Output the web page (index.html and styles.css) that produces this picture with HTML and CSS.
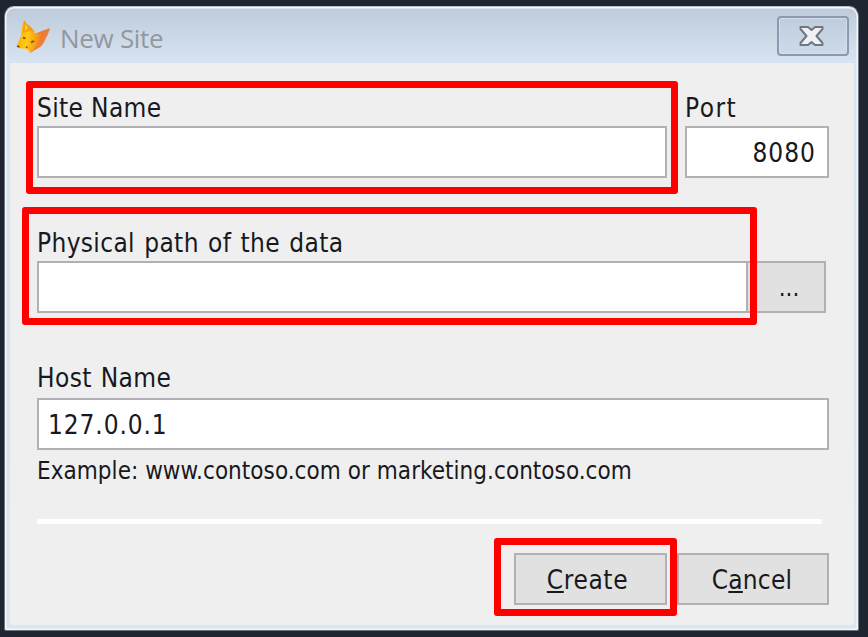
FILE: index.html
```html
<!DOCTYPE html>
<html lang="en">
<head>
<meta charset="utf-8">
<title>New Site</title>
<link rel="stylesheet" href="styles.css">
</head>
<body>
<main class="window">
  <header class="titlebar">
    <svg class="fox" width="36" height="38" viewBox="0 0 36 38" aria-hidden="true">
      <defs>
        <linearGradient id="fur" x1="0" y1="0" x2="1" y2="0.2">
          <stop offset="0" stop-color="#f5ac10"/><stop offset=".5" stop-color="#ffc912"/><stop offset="1" stop-color="#f08a1c"/>
        </linearGradient>
        <linearGradient id="ear" x1="0" y1="0" x2="1" y2="1">
          <stop offset="0" stop-color="#e0702c"/><stop offset=".6" stop-color="#f07f3a"/><stop offset="1" stop-color="#f7a77a"/>
        </linearGradient>
      </defs>
      <path d="M19 16 Q25 13 34 10 Q32 17 30 20 Q27 29 19 32 L14 35 Z" fill="url(#ear)"/>
      <path d="M8 2 Q10 6 14 8 L19 15 Q22 17 26 15 L24 20 L21 27 L15 35 L11 31 L2 30 L1 27 L5 18 L6 9 Z" fill="url(#fur)"/>
      <path d="M8 2 Q10 6 14 8 L19 14 L13 13 L7 15 Z" fill="#f3a014"/>
      <path d="M9 6 L12 10 L9 13 Z" fill="#ffd522"/>
      <path d="M7 19.500 l2.500 1 M15 24.500 l3 -1.500 M1 28 l2.500 1 M10 29 l1.500 .5" stroke="#7d4c0c" stroke-width="1.700" fill="none"/>
    </svg>
    <h1 class="title">New Site</h1>
    <button class="close" aria-label="Close">
      <svg width="27" height="22" viewBox="0 0 27 22">
        <path d="M2.500 2 H10 L13.500 5 L17 2 H24.500 V4 L18.500 11 L24.500 18 V20 H17 L13.500 17 L10 20 H2.500 V18 L8.500 11 L2.500 4 Z" fill="#f0f1f3" stroke="#707683" stroke-width="2" stroke-linejoin="round"/>
      </svg>
    </button>
  </header>
  <form class="content">
    <div class="row row-site">
      <div class="field site marked">
        <label class="label l-site">Site Name</label>
        <div class="input"></div>
      </div>
      <div class="field port">
        <label class="label l-port">Port</label>
        <div class="input right"><span class="v-port">8080</span></div>
      </div>
    </div>
    <div class="row row-path">
      <div class="field path marked">
        <label class="label l-path">Physical path of the data</label>
        <div class="input"></div>
      </div>
      <div class="button browse"><span class="dots">...</span></div>
    </div>
    <div class="field host">
      <label class="label l-host">Host Name</label>
      <div class="input"><span class="v-host">127.0.0.1</span></div>
      <p class="hint">Example: www.contoso.com or marketing.contoso.com</p>
    </div>
    <div class="rule"></div>
    <div class="actions">
      <div class="button create marked"><span class="b-create"><u>C</u>reate</span></div>
      <div class="button cancel"><span class="b-cancel">C<u>a</u>ncel</span></div>
    </div>
  </form>
</main>
</body>
</html>
```
FILE: styles.css
```css
* { box-sizing: border-box; }
body {
  margin: 0;
  width: 868px;
  height: 637px;
  padding: 6px 9px 6px 4px;
  overflow: hidden;
  background: #1f2631;
  font-family: "DejaVu Sans Condensed", "DejaVu Sans", sans-serif;
  font-stretch: condensed;
  color: #181920;
}
.window {
  height: 625px;
  border: 1px solid #6d747d;
  border-top-color: #b9c2cc;
  border-radius: 10px 10px 2px 2px;
  background: linear-gradient(#bdcbdb, #d8e4f1 57px, #dce5f0);
  box-shadow: inset 0 0 0 1.500px #f3f6fa;
  padding: 0 4px 4px 5px;
}
.titlebar {
  height: 56px;
  display: flex;
  align-items: flex-start;
  padding-left: 6px;
}
.fox { margin-top: 11px; flex: none; }
.title {
  margin: 12px 0 0 8px;
  font: 400 26px/38px "Open Sans", sans-serif;
  letter-spacing: -0.3px;
  color: #92989f;
}
.close {
  margin: 9px 5px 0 auto;
  width: 72px;
  height: 40px;
  padding: 0 3px 1px 0;
  border: 2px solid #8c99b2;
  border-radius: 4px;
  background: linear-gradient(#c0cddd, #cddaea);
  box-shadow: inset 0 0 0 1px #d4dfeb;
  display: flex;
  align-items: center;
  justify-content: center;
}
.content {
  height: 562px;
  background: #efefef;
  padding: 28px 25px 0 27px;
}
.row { display: flex; }
.row-site { justify-content: space-between; height: 87px; }
.row-path { margin-top: 48px; height: 87px; align-items: flex-end; }
.field { position: relative; }
.site { width: 630px; }
.port { width: 144px; }
.path { width: 711px; }
.host { margin-top: 50px; }
.label { display: block; height: 35px; font-size: 26px; line-height: 34px; white-space: nowrap; }
.l-site { letter-spacing: 0.35px; }
.l-port { letter-spacing: 1.5px; }
.l-path { letter-spacing: 0.35px; word-spacing: 1.5px; }
.l-host { line-height: 30px; letter-spacing: 0.4px; word-spacing: 1px; }
.input {
  height: 52px;
  border: 2px solid #b1b1b5;
  background: #fff;
  padding: 0 9px;
  font-size: 26px;
  line-height: 51px;
}
.v-port { letter-spacing: 1px; }
.v-host { letter-spacing: 0.9px; }
.right { text-align: right; padding-right: 11px; }
.marked { position: relative; }
.marked::after {
  content: "";
  position: absolute;
  border: 7px solid #f00;
  border-radius: 3px;
}
.site::after { inset: -10px -11px -16px -11px; }
.path::after { inset: -19px -9px -12px -15px; }
.create::after { inset: -17px -12px -13px -22px; }
.button {
  height: 52px;
  border: 2px solid #b1b1b1;
  background: #e1e1e1;
  display: flex;
  justify-content: center;
  font-size: 26px;
  line-height: 51px;
}
.browse { width: 78px; border-left: 0; padding-left: 6px; }
.dots { font-size: 24px; }
.b-create { letter-spacing: 0.6px; margin-right: 6px; }
.b-cancel { letter-spacing: 0.2px; margin-right: 2px; }
.hint { margin: 5px 0 0; font-size: 24px; line-height: 32px; letter-spacing: 0.04px; white-space: nowrap; }
.rule { height: 5px; width: 785px; margin-top: 32px; background: #fff; border-radius: 2px; }
.actions { display: flex; justify-content: flex-end; gap: 10px; margin-top: 29px; }
.create { width: 153px; }
.cancel { width: 152px; }
u { text-decoration-thickness: 2px; text-underline-offset: 2px; text-decoration-skip-ink: none; }
```
